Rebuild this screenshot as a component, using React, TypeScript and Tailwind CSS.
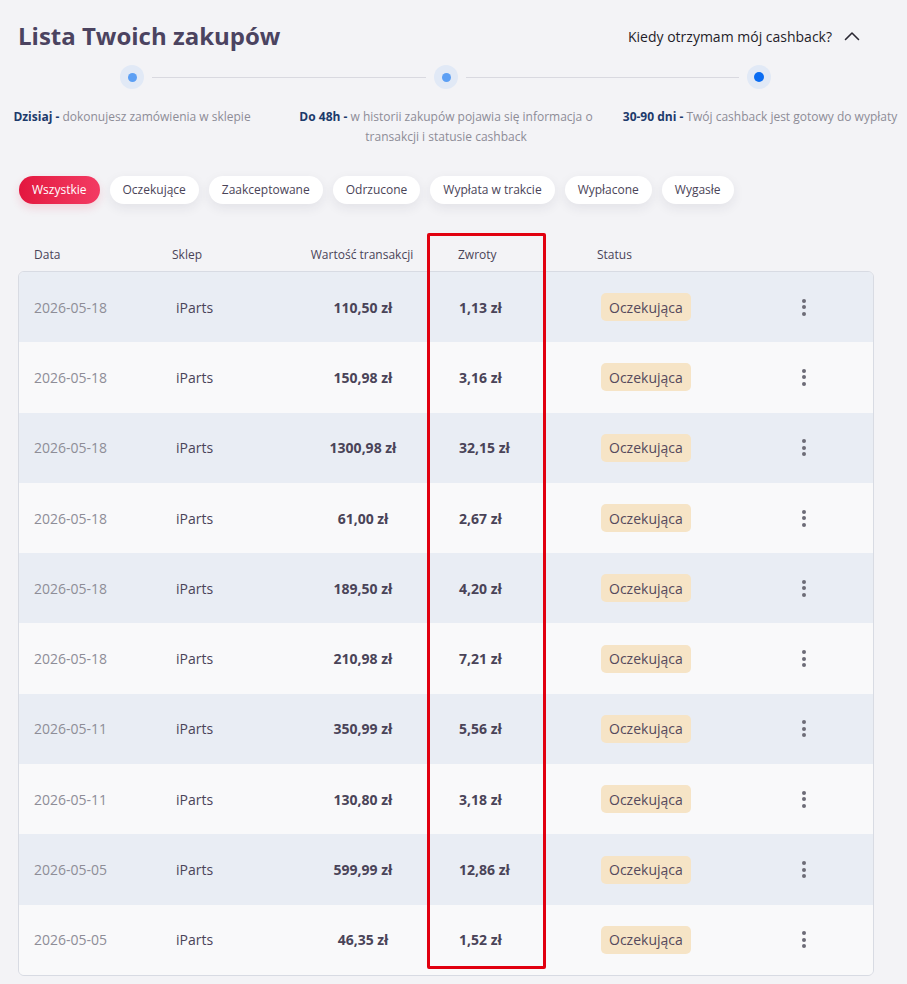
import React from "react";

const rows = [
  { d: "2026-05-18", v: "110,50 zł", z: "1,13 zł" },
  { d: "2026-05-18", v: "150,98 zł", z: "3,16 zł" },
  { d: "2026-05-18", v: "1300,98 zł", z: "32,15 zł" },
  { d: "2026-05-18", v: "61,00 zł", z: "2,67 zł" },
  { d: "2026-05-18", v: "189,50 zł", z: "4,20 zł" },
  { d: "2026-05-18", v: "210,98 zł", z: "7,21 zł" },
  { d: "2026-05-11", v: "350,99 zł", z: "5,56 zł" },
  { d: "2026-05-11", v: "130,80 zł", z: "3,18 zł" },
  { d: "2026-05-05", v: "599,99 zł", z: "12,86 zł" },
  { d: "2026-05-05", v: "46,35 zł", z: "1,52 zł" },
];

const pills = ["Oczekujące", "Zaakceptowane", "Odrzucone", "Wypłata w trakcie", "Wypłacone", "Wygasłe"];

function Dot({ active }: { active?: boolean }) {
  return (
    <div className="w-[24px] h-[24px] rounded-full bg-[#e1e9f6] flex items-center justify-center shrink-0">
      {active ? (
        <div className="w-[10px] h-[10px] rounded-full bg-[#0a6cf2]" />
      ) : (
        <div className="w-[9px] h-[9px] rounded-full bg-[#5c9ff4]" />
      )}
    </div>
  );
}

export default function App() {
  return (
    <div
      className="relative w-[907px] h-[984px] overflow-hidden bg-[#f3f3f6] text-[#4a4458]"
      style={{ fontFamily: '"Open Sans", "Noto Sans", sans-serif' }}
    >
      {/* Header */}
      <div className="flex items-center justify-between pt-[20px] pl-[18px] pr-[47px] h-[52px]">
        <h1 className="text-[24px] leading-[32px] font-bold text-[#4b4360]">Lista Twoich zakupów</h1>
        <div className="flex items-center gap-[12px] text-[14px] text-[#1f1d29]">
          <span>Kiedy otrzymam mój cashback?</span>
          <svg width="16" height="10" viewBox="0 0 16 10" fill="none">
            <polyline points="1.5,8.5 8,2 14.5,8.5" stroke="#2a2833" strokeWidth="1.6" strokeLinecap="round" strokeLinejoin="round" />
          </svg>
        </div>
      </div>

      {/* Timeline dots */}
      <div className="flex items-center ml-[120px] mt-[13px] h-[24px]">
        <Dot />
        <div className="w-[274px] h-px bg-[#d9d9e0] mx-[8px]" />
        <Dot />
        <div className="w-[273px] h-px bg-[#d9d9e0] mx-[8px]" />
        <Dot active />
      </div>

      {/* Timeline texts */}
      <div className="grid grid-cols-3 w-[942px] ml-[-25px] mt-[18px] h-[40px] text-[12px] leading-[20px] text-[#8d8c96] text-center">
        <div className="px-[8px] whitespace-nowrap">
          <span className="font-bold text-[#1c3a6b]">Dzisiaj -</span> dokonujesz zamówienia w sklepie
        </div>
        <div className="px-[8px] whitespace-nowrap">
          <span className="font-bold text-[#1c3a6b]">Do 48h -</span> w historii zakupów pojawia się informacja o
          <br />
          transakcji i statusie cashback
        </div>
        <div className="px-[8px] whitespace-nowrap">
          <span className="font-bold text-[#1c3a6b]">30-90 dni -</span> Twój cashback jest gotowy do wypłaty
        </div>
      </div>

      {/* Filter pills */}
      <div className="flex items-center gap-[10px] ml-[19px] mt-[29px] h-[28px]">
        <div className="h-[28px] px-[13px] rounded-full flex items-center text-[12px] text-white bg-gradient-to-r from-[#e3163f] to-[#f33a63] shadow-[0_4px_10px_rgba(230,30,70,0.15)]">
          Wszystkie
        </div>
        {pills.map((p) => (
          <div
            key={p}
            className="h-[28px] px-[13px] rounded-full flex items-center text-[12px] text-[#4a4458] bg-white shadow-[0_4px_12px_rgba(40,40,70,0.08)]"
          >
            {p}
          </div>
        ))}
      </div>

      {/* Table header */}
      <div className="flex items-center ml-[18px] mt-[34px] h-[33px] pt-[1px] text-[12px] text-[#4a4458]">
        <div className="w-[154px] pl-[16px]">Data</div>
        <div className="w-[120px]">Sklep</div>
        <div className="w-[140px] text-center">Wartość transakcji</div>
        <div className="w-[139px] pl-[26px]">Zwroty</div>
        <div className="pl-[26px]">Status</div>
      </div>

      {/* Table body */}
      <div className="ml-[18px] w-[856px] border border-[#d8dbe3] rounded-[6px] overflow-hidden">
        {rows.map((r, i) => (
          <div
            key={i}
            className={`flex items-center h-[70.3px] ${i % 2 === 0 ? "bg-[#e9edf4]" : "bg-[#f9f9fa]"}`}
          >
            <div className="w-[153px] pl-[15px] text-[14px] text-[#8e8d97]">{r.d}</div>
            <div className="w-[120px] pl-[4px] text-[14px] text-[#4a4458]">iParts</div>
            <div className="w-[142px] text-center text-[14px] font-bold text-[#4a4458]">{r.v}</div>
            <div className="w-[139px] pl-[25px] text-[14px] font-bold text-[#4a4458]">{r.z}</div>
            <div className="w-[157px] pl-[28px]">
              <span className="inline-flex items-center h-[28px] px-[8px] rounded-[5px] bg-[#f6e4c6] text-[14px] text-[#55495c]">
                Oczekująca
              </span>
            </div>
            <div className="flex-1">
              <div className="ml-[72px] flex flex-col gap-[2.5px] w-[4px]">
                <div className="w-[4px] h-[4px] rounded-full bg-[#6d6c76]" />
                <div className="w-[4px] h-[4px] rounded-full bg-[#6d6c76]" />
                <div className="w-[4px] h-[4px] rounded-full bg-[#6d6c76]" />
              </div>
            </div>
          </div>
        ))}
      </div>

      {/* Red annotation box */}
      <div className="absolute left-[427px] top-[233px] w-[119px] h-[736px] border-[3px] border-[#e1000f] rounded-[2px] pointer-events-none" />
    </div>
  );
}
